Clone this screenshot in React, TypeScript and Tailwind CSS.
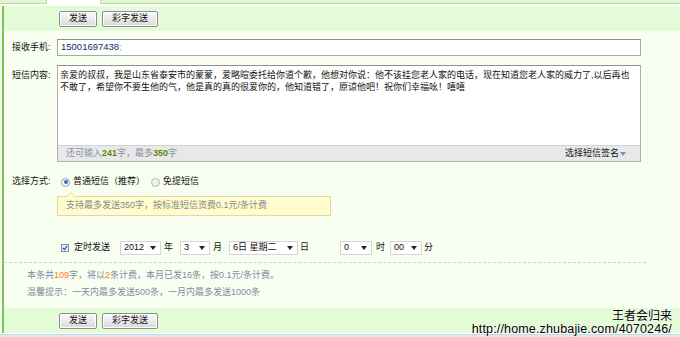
import React from "react";

const F = { fontFamily: '"Liberation Sans","Noto Sans CJK SC",sans-serif' } as React.CSSProperties;

function Btn({ w, children }: { w: string; children: React.ReactNode }) {
  return (
    <div
      className={`${w} h-[16px] flex items-center justify-center border border-[#8c8c8c] rounded-[2px] bg-linear-to-b from-[#fbfbfb] to-[#d9d9d9] text-[9px] text-[#111] shadow-[inset_0_0_0_1px_#ffffff]`}
    >
      {children}
    </div>
  );
}

function Tri({ c = "#222" }: { c?: string }) {
  return (
    <svg width="6" height="4" viewBox="0 0 6 4">
      <path d="M0 0H6L3 4Z" fill={c} />
    </svg>
  );
}

function Sel({ w, label }: { w: string; label: string }) {
  return (
    <div className={`${w} h-[14px] flex items-center justify-between pl-[3px] pr-[4px] bg-white border border-[#d6d6d6] text-[9px] text-[#111]`}>
      <span>{label}</span>
      <Tri />
    </div>
  );
}

function ButtonBar({ h }: { h: string }) {
  return (
    <div className={`${h} bg-[#e3fbd6] flex items-center gap-[5px] pl-[55px]`}>
      <Btn w="w-[38px]">发送</Btn>
      <Btn w="w-[56px]">彩字发送</Btn>
    </div>
  );
}

export default function App() {
  return (
    <div style={F} className="w-[680px] h-[337px] relative overflow-hidden bg-[#f8fff1] flex flex-col text-[9px] text-[#222]">
      {/* tab strip */}
      <div className="h-[4px] flex shrink-0">
        <div className="w-[47px] bg-[#e0f7cf] border-r border-b border-[#bcd8a6]" />
        <div className="w-[53px] bg-white" />
        <div className="flex-1 bg-[#e0f7cf] border-l border-b border-[#bcd8a6]" />
      </div>
      <div className="h-[2px] bg-white shrink-0" />

      {/* main */}
      <div className="flex-1 ml-[2px] border-l-2 border-[#79c94e] flex flex-col">
        <ButtonBar h="h-[25px]" />

        {/* phone */}
        <div className="mt-[8px] flex items-center pl-[8px] h-[17px]">
          <div className="w-[45px] text-[#111]">接收手机:</div>
          <div className="w-[584px] h-[17px] bg-white border border-[#a9a9a9] border-t-[#8e8e8e] flex items-center pl-[3px] text-[9.5px] text-[#1a2a66]">
            15001697438<span className="text-[#9aa]">;</span>
          </div>
        </div>

        {/* content */}
        <div className="mt-[9px] flex pl-[8px]">
          <div className="w-[45px] pt-[4px] text-[#111]">短信内容:</div>
          <div className="w-[584px] h-[97px] bg-white border border-[#b0b0b0] border-t-[#909090] flex flex-col">
            <div className="flex-1 px-[2px] pt-[3px] leading-[12px] text-[9px] text-[#111]">
              亲爱的叔叔，我是山东省泰安市的蒙蒙，爱略暄委托给你道个歉，他想对你说：他不该挂您老人家的电话，现在知道您老人家的威力了,以后再也不敢了，希望你不要生他的气，他是真的真的很爱你的，他知道错了，原谅他吧！祝你们幸福吆！嘻嘻
            </div>
            <div className="h-[16px] bg-[#e8e8e8] border-t border-[#d2d2d2] flex items-center justify-between pl-[8px] pr-[14px]">
              <span className="text-[#8a93a8]">
                还可输入<span className="text-[#5a8a00] font-bold">241</span>字，最多<span className="text-[#5a8a00] font-bold">350</span>字
              </span>
              <span className="flex items-center gap-[1px] text-[#111]">
                选择短信签名
                <Tri c="#6a9ac8" />
              </span>
            </div>
          </div>
        </div>

        {/* radio */}
        <div className="mt-[14px] flex items-center pl-[8px] h-[12px]">
          <div className="w-[49px] text-[#111]">选择方式:</div>
          <div className="flex items-center gap-[3px]">
            <span className="w-[9px] h-[9px] rounded-full border border-[#8a9ab0] bg-white flex items-center justify-center">
              <span className="w-[4px] h-[4px] rounded-full bg-[#2a6ad8]" />
            </span>
            <span className="text-[#111]">普通短信（推荐）</span>
          </div>
          <div className="flex items-center gap-[3px] ml-[6px]">
            <span className="w-[9px] h-[9px] rounded-full border border-[#b8b8b8] bg-[#f0f0f0]" />
            <span className="text-[#111]">免提短信</span>
          </div>
        </div>

        {/* tooltip */}
        <div className="mt-[8px] ml-[53px] relative w-[274px] h-[20px] bg-[#fffccf] border border-[#e0d9a0] flex items-center pl-[8px] text-[#8a8a8a]">
          <div className="absolute left-[8px] top-[-5px] w-0 h-0 border-l-[5px] border-r-[5px] border-b-[5px] border-l-transparent border-r-transparent border-b-[#e0d9a0]" />
          <div className="absolute left-[9px] top-[-4px] w-0 h-0 border-l-[4px] border-r-[4px] border-b-[4px] border-l-transparent border-r-transparent border-b-[#fffccf]" />
          支持最多发送350字，按标准短信资费0.1元/条计费
        </div>

        {/* timer */}
        <div className="mt-[25px] flex items-center h-[14px] pl-[57px] text-[#111]">
          <span className="w-[8px] h-[8px] border border-[#7d8fae] bg-[#e8eef8] flex items-center justify-center">
            <svg width="6" height="6" viewBox="0 0 6 6">
              <path d="M1 3L2.5 4.6L5 1" stroke="#2a4aa8" strokeWidth="1.2" fill="none" />
            </svg>
          </span>
          <span className="ml-[5px]">定时发送</span>
          <span className="ml-[10px]"><Sel w="w-[41px]" label="2012" /></span>
          <span className="ml-[3px]">年</span>
          <span className="ml-[7px]"><Sel w="w-[30px]" label="3" /></span>
          <span className="ml-[3px]">月</span>
          <span className="ml-[7px]"><Sel w="w-[69px]" label="6日 星期二" /></span>
          <span className="ml-[2px]">日</span>
          <span className="ml-[31px]"><Sel w="w-[32px]" label="0" /></span>
          <span className="ml-[4px]">时</span>
          <span className="ml-[5px]"><Sel w="w-[32px]" label="00" /></span>
          <span className="ml-[2px]">分</span>
        </div>

        {/* dashed */}
        <div className="mt-[7px] w-[642px] border-t border-dashed border-[#c8d0dc]" />

        <div className="mt-[6px] pl-[23px] leading-[12px] text-[#7f8ca4]">
          本条共<span className="text-[#ff7a1a]">109</span>字，将以<span className="text-[#ff7a1a]">2</span>条计费，本月已发16条，按0.1元/条计费。
        </div>
        <div className="mt-[5px] pl-[23px] leading-[12px] text-[#7f8ca4]">
          温馨提示：一天内最多发送500条，一月内最多发送1000条
        </div>

        <div className="mt-[10px]">
          <ButtonBar h="h-[25px]" />
        </div>
        <div className="flex-1" />
      </div>
      <div className="h-[1px] bg-white shrink-0" />
      <div className="h-[4px] bg-[#dfe8ee] border-t border-[#c8d6e0] shrink-0" />

      {/* watermark */}
      <div className="absolute right-[8px] bottom-[1px] flex flex-col items-end text-black [text-shadow:0_0_2px_#fff,0_0_1px_#fff]">
        <div className="text-[12px] leading-[15px]" style={{ fontFamily: '"Noto Sans CJK SC",sans-serif' }}>王者会归来</div>
        <div className="text-[12.5px] leading-[14px] tracking-[0.15px]" style={{ fontFamily: '"Liberation Sans",sans-serif' }}>http://home.zhubajie.com/4070246/</div>
      </div>
    </div>
  );
}
